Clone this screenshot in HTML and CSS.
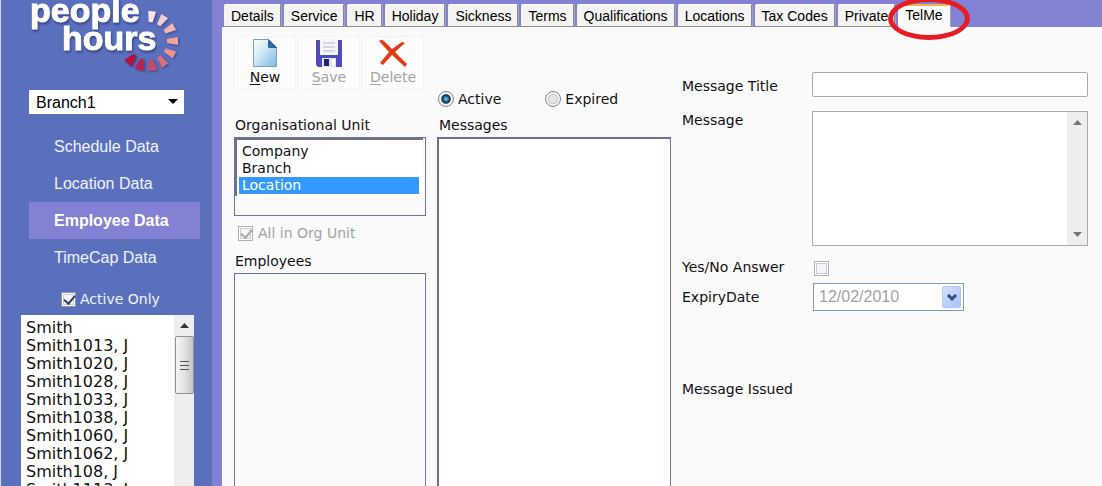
FILE: index.html
```
<!DOCTYPE html>
<html lang="en">
<head>
<meta charset="UTF-8" />
<meta name="viewport" content="width=device-width, initial-scale=1.0"/>
<title>People Hours - TelMe</title>
<link rel="stylesheet" href="styles.css">
</head>
<body>
<aside class="sidebar">
  <svg class="logo" viewBox="0 0 184 76" role="img" aria-label="people hours">
    <g class="logo-text">
      <text x="29" y="22">people</text>
      <text x="61" y="50">hours</text>
    </g>
    <g class="logo-rays" transform="translate(147 41)">
      <path fill="#fbe3ea" transform="rotate(8)" d="M-4-30h8l-2 11h-4z"/>
      <path fill="#f6ccd5" transform="rotate(34)" d="M-4-30h8l-2 11h-4z"/>
      <path fill="#f4b4b4" transform="rotate(61)" d="M-4-30h8l-2 11h-4z"/>
      <path fill="#f2a298" transform="rotate(90)" d="M-4-30h8l-2 11h-4z"/>
      <path fill="#e89494" transform="rotate(118)" d="M-4-30h8l-2 11h-4z"/>
      <path fill="#d6707c" transform="rotate(145)" d="M-4-30h8l-2 11h-4z"/>
      <path fill="#c24c6a" transform="rotate(171)" d="M-5-30h10l-3 11h-4z"/>
      <path fill="#b82450" transform="rotate(197)" d="M-5-30h10l-3 11h-4z"/>
      <path fill="#b4103c" transform="rotate(222)" d="M-5-30h10l-3 11h-4z"/>
    </g>
  </svg>
  <div class="branch">
    <select class="branch-select" aria-label="Branch">
      <option>Branch1</option>
    </select>
    <svg class="branch-arrow" viewBox="0 0 10 5"><path d="M0 0h10L5 5z"/></svg>
  </div>
  <nav class="menu">
    <a href="#">Schedule Data</a>
    <a href="#">Location Data</a>
    <a href="#" class="current">Employee Data</a>
    <a href="#">TimeCap Data</a>
  </nav>
  <label class="active-only"><input type="checkbox" class="check" checked> Active Only</label>
  <div class="staff">
    <select class="staff-list" size="12" aria-label="Staff">
      <option>Smith</option>
      <option>Smith1013, J</option>
      <option>Smith1020, J</option>
      <option>Smith1028, J</option>
      <option>Smith1033, J</option>
      <option>Smith1038, J</option>
      <option>Smith1060, J</option>
      <option>Smith1062, J</option>
      <option>Smith108, J</option>
      <option>Smith1113, J</option>
    </select>
    <div class="scroll">
      <svg class="scroll-arrow" viewBox="0 0 9 5"><path d="M0 5h9L4.500 0z"/></svg>
      <div class="thumb"><i></i><i></i><i></i></div>
    </div>
  </div>
</aside>

<main class="main">
  <ul class="tabs">
    <li><a href="#">Details</a></li>
    <li><a href="#">Service</a></li>
    <li><a href="#">HR</a></li>
    <li><a href="#">Holiday</a></li>
    <li><a href="#">Sickness</a></li>
    <li><a href="#">Terms</a></li>
    <li><a href="#">Qualifications</a></li>
    <li><a href="#">Locations</a></li>
    <li><a href="#">Tax Codes</a></li>
    <li><a href="#">Private</a></li>
    <li class="open"><a href="#">TelMe</a><span class="ring"></span></li>
  </ul>

  <div class="content">
    <section class="units">
      <div class="toolbar">
        <button class="tool">
          <svg viewBox="0 0 32 30">
            <defs><linearGradient id="page" x1="0" y1="0" x2="1" y2="1"><stop offset="0" stop-color="#fff"/><stop offset=".4" stop-color="#d3eafa"/><stop offset="1" stop-color="#7db9e2"/></linearGradient></defs>
            <path d="M4.500 1.500h15l8 8v19h-23z" fill="url(#page)" stroke="#7d9fc4"/>
            <path d="M19.500 1.500v8h8z" fill="#2b66a5" stroke="#2b66a5"/>
          </svg>
          <span><u>N</u>ew</span>
        </button>
        <button class="tool" disabled>
          <svg viewBox="0 0 32 30">
            <path d="M3 2h26v27H5l-2-2z" fill="#4f4bbd"/>
            <path d="M7 1h18v16H7z" fill="#f4f4fb"/>
            <path d="M10 5h12M10 9h12M10 13h12" stroke="#b9b9c4"/>
            <path d="M9 20h14v9H9z" fill="#dfe3f5"/>
            <path d="M11 21h5v7h-5z" fill="#23236e"/>
            <path d="M19 21h3v7h-3z" fill="#fff"/>
          </svg>
          <span><u>S</u>ave</span>
        </button>
        <button class="tool" disabled>
          <svg viewBox="0 0 32 30">
            <path d="M2 3q3-2 5 0l8 8 10-7 3 1-10 9 12 12-2 3L15 17 6 27l-3-2 9-11z" fill="#e63a12"/>
          </svg>
          <span><u>D</u>elete</span>
        </button>
      </div>
      <label class="caption" for="org">Organisational Unit</label>
      <div class="org-box">
        <select id="org" class="org-list" size="3">
          <option>Company</option>
          <option>Branch</option>
          <option selected>Location</option>
        </select>
      </div>
      <label class="all-org"><input type="checkbox" class="check" checked disabled> All in Org Unit</label>
      <label class="caption" for="employees">Employees</label>
      <select id="employees" class="box" size="12"></select>
    </section>

    <section class="messages">
      <div class="status">
        <label><input type="radio" name="status" class="radio" checked> Active</label>
        <label><input type="radio" name="status" class="radio"> Expired</label>
      </div>
      <label class="caption" for="messages">Messages</label>
      <select id="messages" class="box box-white" size="12"></select>
    </section>

    <form class="form">
      <label for="title">Message Title</label>
      <input type="text" id="title" class="title-input">
      <label for="message">Message</label>
      <div class="message-box">
        <textarea id="message"></textarea>
        <div class="scroll scroll-off">
          <svg class="scroll-arrow" viewBox="0 0 9 5"><path d="M0 5h9L4.500 0z"/></svg>
          <svg class="scroll-arrow" viewBox="0 0 9 5"><path d="M0 0h9L4.500 5z"/></svg>
        </div>
      </div>
      <label for="answer">Yes/No Answer</label>
      <input type="checkbox" id="answer" class="check" disabled>
      <label for="expiry">ExpiryDate</label>
      <div class="date">
        <input type="text" id="expiry" value="12/02/2010" disabled>
        <button type="button" aria-label="Pick date" disabled><svg viewBox="0 0 10 8"><path d="M1 1l4 4 4-4" fill="none" stroke="#2f4a7c" stroke-width="3"/></svg></button>
      </div>
      <p class="issued">Message Issued</p>
    </form>
  </div>
</main>
</body>
</html>
```
FILE: styles.css
```
* {
  box-sizing: border-box;
}
body {
  margin: 0;
  height: 100vh;
  display: flex;
  overflow: hidden;
  background: #8381d3;
  color: #111;
  font-family: "DejaVu Sans", Verdana, sans-serif;
  font-size: 14px;
  line-height: 18px;
}
select, input, textarea, button {
  margin: 0;
  font-family: inherit;
  font-size: inherit;
  color: inherit;
}

/* sidebar */
.sidebar {
  flex: 0 0 212px;
  display: flex;
  flex-direction: column;
  background: #5b70bd;
  border-left: 1px solid #d4d8ec;
  color: #eef3ff;
}
.logo {
  flex: none;
  width: 184px;
  height: 76px;
}
.logo-text {
  font-family: "Liberation Sans", Arial, sans-serif;
  font-size: 34px;
  font-weight: bold;
  fill: #fff;
  stroke: #fff;
  filter: drop-shadow(1px 2px 1px #34468c);
}
.logo-rays {
  filter: drop-shadow(1px 1px 1px #34468c);
}
.branch {
  position: relative;
  width: 155px;
  margin: 14px 0 14px 28px;
}
.branch-select {
  display: block;
  appearance: none;
  width: 100%;
  height: 24px;
  padding: 0 7px;
  border: 0;
  border-radius: 0;
  background: #fff;
  color: #000;
  font-family: "Liberation Sans", Arial, sans-serif;
  font-size: 16px;
}
.branch-arrow {
  position: absolute;
  right: 6px;
  top: 9px;
  width: 10px;
  height: 5px;
  pointer-events: none;
}
.menu {
  margin: 0 12px 0 28px;
  font-family: "Liberation Sans", Arial, sans-serif;
  font-size: 16px;
}
.menu a {
  display: block;
  padding: 0 25px;
  line-height: 37px;
  color: inherit;
  text-decoration: none;
}
.menu .current {
  background: #8381d3;
  color: #fff;
  font-weight: bold;
}
.active-only {
  display: flex;
  align-items: center;
  gap: 4px;
  margin: 14px 0 7px 60px;
}
.staff {
  flex: 1;
  display: flex;
  min-height: 0;
  margin: 0 18px 0 20px;
  background: #fff;
}
.staff-list {
  flex: 1;
  min-width: 0;
  padding: 3px 0;
  border: 0;
  background: #fff;
  color: #111;
  font-size: 16px;
  overflow: hidden;
}
.staff-list option {
  height: 18px;
  min-height: 18px;
  padding: 0 5px;
  line-height: 18px;
}

/* form controls */
.check {
  appearance: none;
  flex: none;
  width: 15px;
  height: 15px;
  border: 1px solid #8a93a8;
  background: #f4f5f8;
  box-shadow: inset 0 0 0 1px #fff, inset 0 0 0 2px #c8ccd4;
}
.check:checked::before {
  content: "";
  display: block;
  width: 5px;
  height: 9px;
  margin: 0 4px;
  border: solid #2d3c70;
  border-width: 0 2px 2px 0;
  transform: rotate(40deg);
}
.check:disabled {
  border-color: #b0b0b0;
}
.check:disabled:checked::before {
  border-color: #aaa;
}
.radio {
  appearance: none;
  flex: none;
  width: 16px;
  height: 16px;
  border: 1px solid #858585;
  border-radius: 50%;
  background: radial-gradient(closest-side, #e6e6e6 50%, #c4c4c4 65%, #f6f6f6 80%);
}
.radio:checked {
  background: radial-gradient(closest-side, #8fd6f0 0, #1f6f99 35%, #0d2b45 60%, #f6f6f6 75%);
}
.scroll {
  flex: 0 0 20px;
  display: flex;
  flex-direction: column;
  align-items: center;
  background: #eee;
}
.scroll-arrow {
  width: 9px;
  height: 5px;
  margin: 8px 0;
  fill: #333;
}
.scroll-off {
  justify-content: space-between;
}
.scroll-off .scroll-arrow {
  fill: #777;
}
.thumb {
  display: flex;
  flex-direction: column;
  align-items: center;
  justify-content: center;
  gap: 3px;
  width: 19px;
  height: 58px;
  border: 1px solid #929292;
  border-radius: 2px;
  background: linear-gradient(to right, #f5f5f5, #e3e3e3 50%, #c4c4c4);
}
.thumb i {
  width: 9px;
  height: 1px;
  background: #555;
}

/* tabs */
.main {
  flex: 1;
  min-width: 0;
  display: flex;
  flex-direction: column;
  margin-left: 10px;
}
.tabs {
  display: flex;
  gap: 3px;
  height: 27px;
  margin: 0;
  padding: 4px 0 0 2px;
  list-style: none;
  font-family: "Liberation Sans", Arial, sans-serif;
}
.tabs li {
  position: relative;
}
.tabs a {
  display: block;
  height: 23px;
  padding: 0 6px 0 7px;
  border-top: 1px solid #fff;
  border-right: 1px solid #85859a;
  border-bottom: 1px solid #8e8e86;
  border-radius: 2px 2px 0 0;
  background: #f4f4f2;
  box-shadow: 1px 0 #a5a5bc;
  color: #000;
  line-height: 23px;
  text-decoration: none;
}
.tabs .open a {
  border-top: 2px solid #f7b04a;
  border-right-color: #fff;
  border-bottom-color: #fafafa;
  background: #fcfcfc;
  line-height: 19px;
}
.ring {
  position: absolute;
  left: -10px;
  top: -7px;
  width: 82px;
  height: 43px;
  border: 5px solid #e51c23;
  border-radius: 50%;
  pointer-events: none;
}

/* content */
.content {
  flex: 1;
  min-height: 0;
  display: grid;
  grid-template-columns: 192px 234px 1fr;
  gap: 11px;
  padding: 9px 14px 0 12px;
  background: #fafafa;
}
.units, .messages {
  display: flex;
  flex-direction: column;
  min-height: 0;
}
.toolbar {
  display: flex;
  gap: 2px;
  height: 53px;
  margin-bottom: 27px;
}
.tool {
  display: flex;
  flex-direction: column;
  align-items: center;
  width: 62px;
  padding: 1px 0 0;
  border: 1px solid #f4f4f4;
  background: #fcfcfc;
  line-height: 18px;
}
.tool svg {
  width: 32px;
  height: 30px;
}
.tool:disabled {
  color: #a3a3a3;
}
.tool u {
  text-underline-offset: 2px;
}
.caption {
  padding: 0 2px;
  margin-bottom: 3px;
}
.units .caption {
  padding: 0 1px;
}
.org-box {
  height: 79px;
  border: 1px solid #6b73a5;
}
.org-list {
  display: block;
  width: 188px;
  height: 58px;
  padding: 3px 4px 0 2px;
  border: 2px solid #6f6f85;
  border-right: 0;
  border-bottom: 0;
  border-radius: 0;
  background: #fff;
  overflow: hidden;
}
.org-list option {
  min-height: 17px;
  padding: 0 3px;
  line-height: 17px;
}
.org-list option:checked {
  background: #3399ff linear-gradient(#3399ff, #3399ff);
  -webkit-text-fill-color: #fff;
}
.all-org {
  display: flex;
  align-items: center;
  gap: 5px;
  margin: 8px 4px 10px;
  color: #a3a3a3;
}
.box {
  flex: 1;
  min-height: 0;
  border: 1px solid #6b73a5;
  border-bottom: 0;
  border-radius: 0;
  background: #fafafa;
}
.box-white {
  border-top: 2px solid #6f6f85;
  border-left: 2px solid #6f6f85;
  background: #fff;
}
.status {
  display: flex;
  gap: 44px;
  margin: 54px 0 8px 1px;
}
.status label {
  display: flex;
  align-items: center;
  gap: 4px;
}

/* message form */
.form {
  display: grid;
  grid-template-columns: 130px 1fr;
  align-content: start;
  align-items: start;
  padding-top: 36px;
}
.form > label {
  padding-top: 5px;
}
.title-input {
  width: 100%;
  height: 25px;
  margin-bottom: 14px;
  border: 1px solid #aaa;
  border-radius: 2px;
  background: #fff;
}
.form > label[for="message"] {
  padding-top: 0;
}
.message-box {
  display: flex;
  height: 135px;
  margin-bottom: 15px;
  border: 1px solid #aaa;
  background: #fff;
}
.message-box textarea {
  flex: 1;
  min-width: 0;
  border: 0;
  background: #fff;
  resize: none;
}
.form > label[for="answer"] {
  padding-top: 0;
  margin-top: -3px;
}
.form .check {
  margin: 0 2px 7px;
}
.date {
  display: flex;
  width: 151px;
  height: 28px;
  margin-left: 1px;
  padding: 2px;
  border: 1px solid #7f9db9;
  background: #fff;
}
.date input {
  flex: 1;
  min-width: 0;
  padding: 0 3px;
  border: 0;
  background: #fff;
  color: #a3a3a3;
  font-family: "Liberation Sans", Arial, sans-serif;
  font-size: 16px;
}
.date button {
  width: 19px;
  padding: 0;
  border: 1px solid #b5c8f5;
  border-radius: 2px;
  background: linear-gradient(135deg, #d5e1fd, #a9c1f7);
}
.date svg {
  width: 10px;
  height: 8px;
}
.issued {
  grid-column: 1 / -1;
  margin: 69px 0 0;
}
```
